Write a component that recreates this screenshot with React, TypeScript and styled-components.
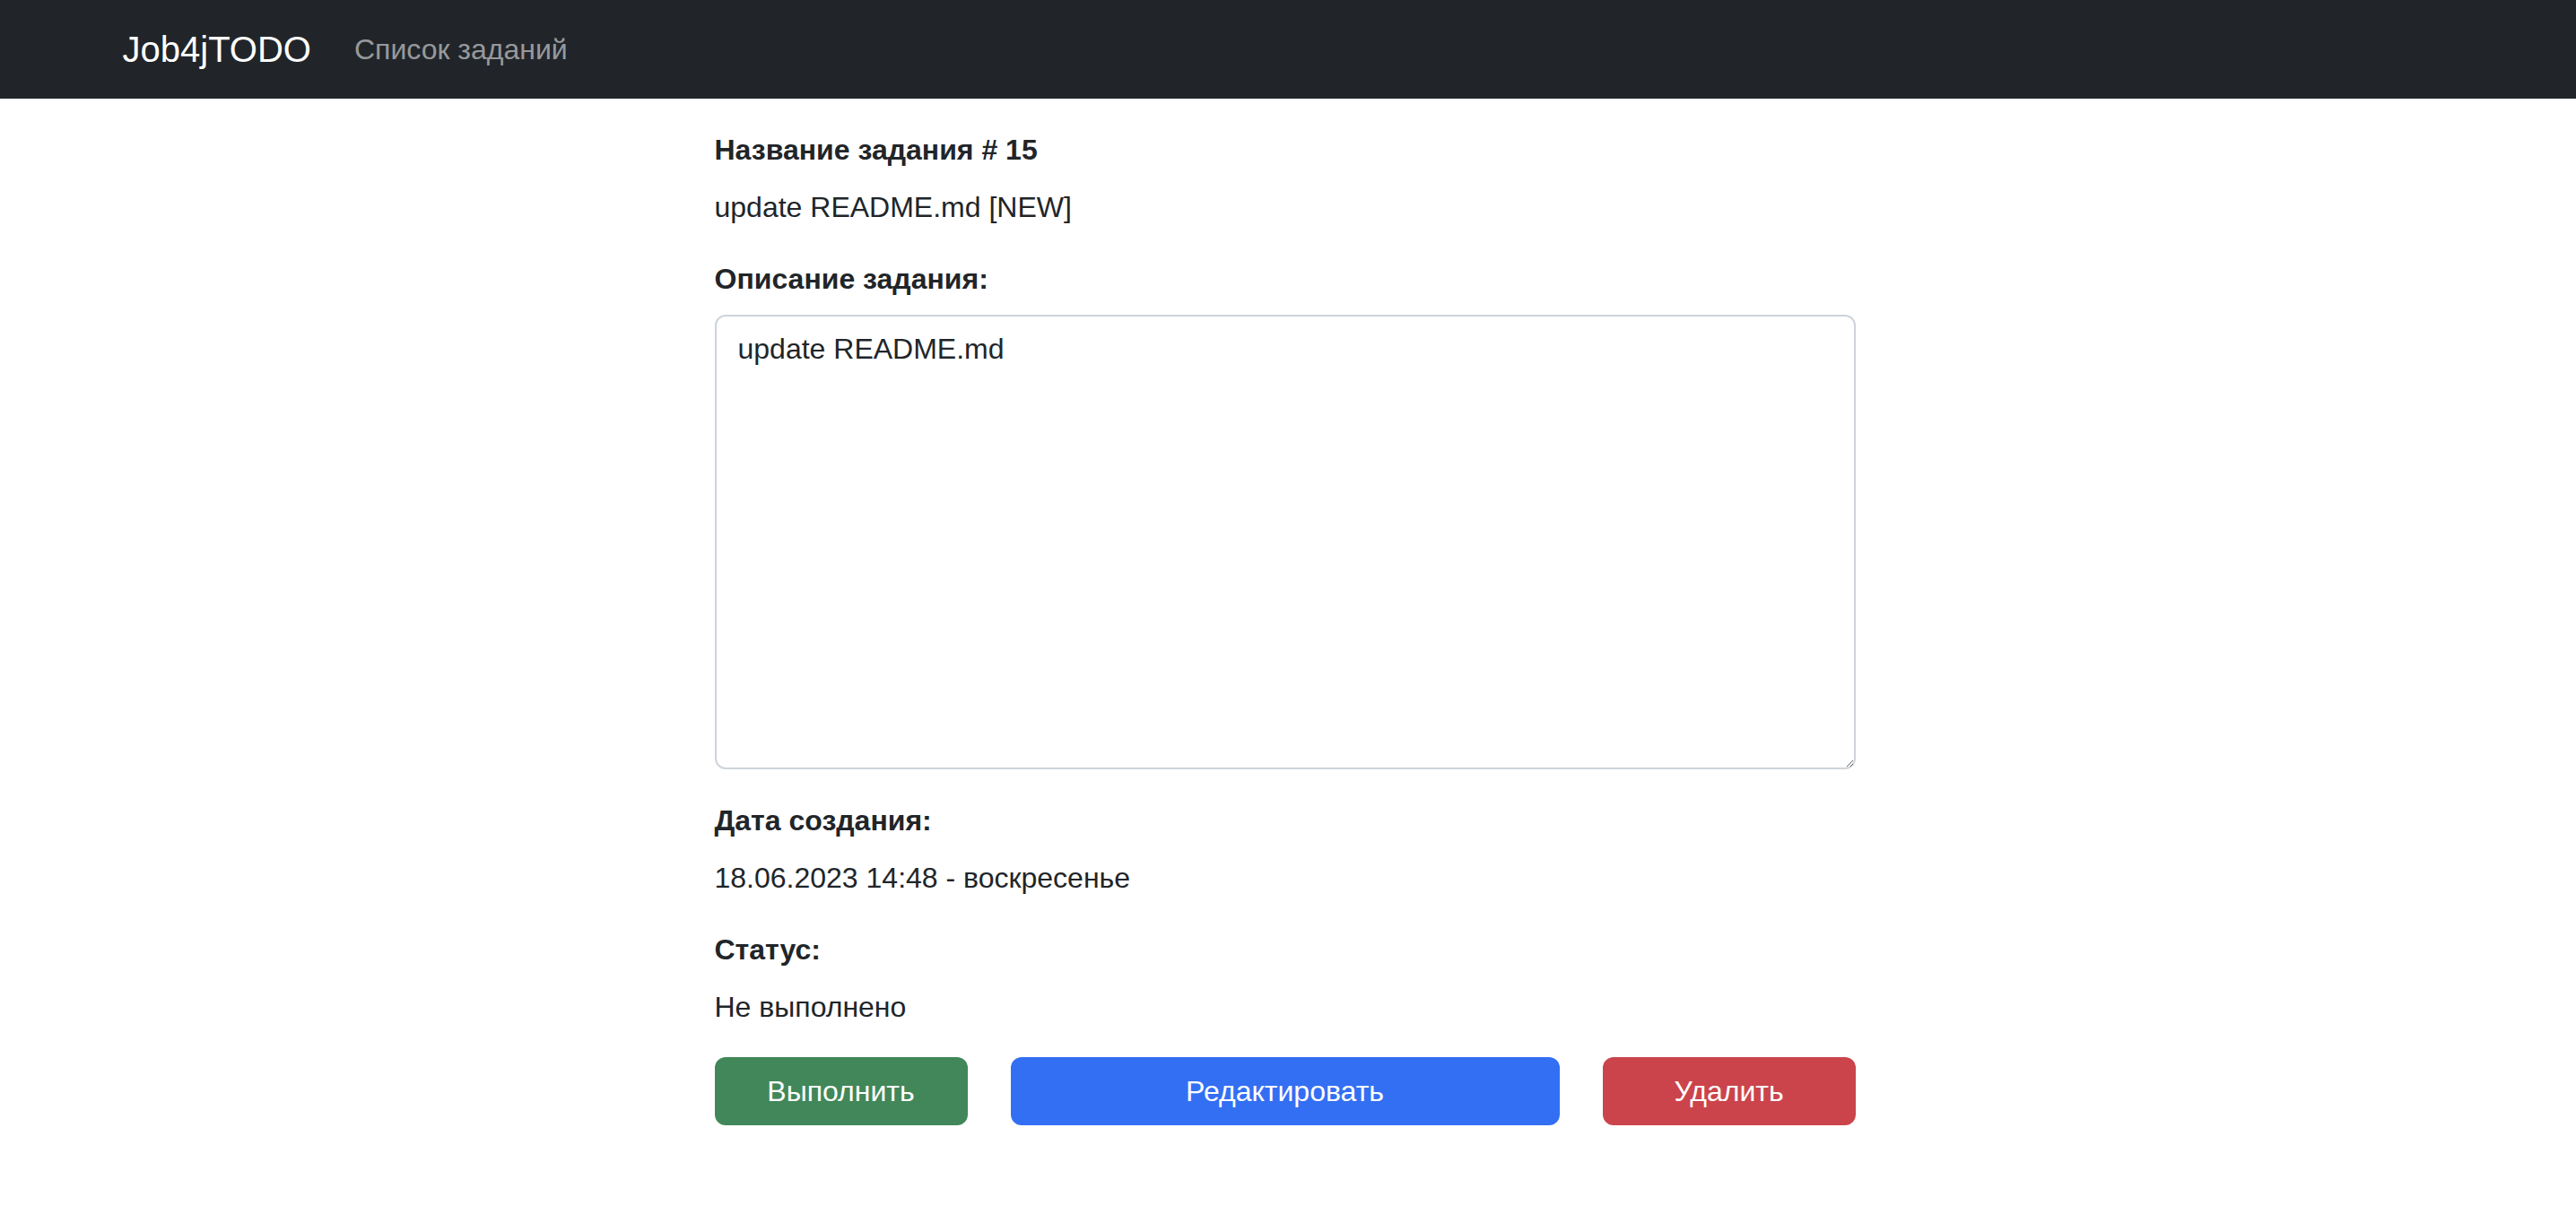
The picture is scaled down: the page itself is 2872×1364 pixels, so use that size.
import React from "react";
import styled, { createGlobalStyle } from "styled-components";

const GlobalStyle = createGlobalStyle`
  html, body {
    margin: 0;
    padding: 0;
    background: #ffffff;
  }
  body {
    font-family: "Liberation Sans", Arial, sans-serif;
    font-size: 32px;
    line-height: 48px;
    color: #212529;
  }
  *, *::before, *::after {
    box-sizing: border-box;
  }
`;

const NavBar = styled.nav`
  background: #212529;
  height: 110px;
  padding-right: 7px;
  display: flex;
  align-items: center;
`;

const NavContainer = styled.div`
  width: 2640px;
  margin: 0 auto;
  padding: 0 24px;
  display: flex;
  align-items: center;
`;

const Brand = styled.a`
  font-size: 40px;
  line-height: 60px;
  color: #ffffff;
  text-decoration: none;
  margin-right: 32px;
`;

const NavLink = styled.a`
  font-size: 32px;
  line-height: 48px;
  padding: 0 16px;
  color: rgba(255, 255, 255, 0.55);
  text-decoration: none;
`;

const Page = styled.div`
  padding-right: 7px;
`;

const Main = styled.main`
  width: 1272px;
  margin: 33px auto 0;
  display: flex;
  flex-direction: column;
`;

const Label = styled.label`
  display: block;
  font-weight: 700;
  margin-bottom: 16px;
`;

const Value = styled.p`
  margin: 0 0 32px;
`;

const Description = styled.textarea`
  display: block;
  width: 100%;
  height: 507px;
  margin: 0 0 33px;
  padding: 12px 24px;
  font-family: "Liberation Sans", Arial, sans-serif;
  font-size: 32px;
  line-height: 48px;
  color: #212529;
  background: #ffffff;
  border: 2px solid #ced4da;
  border-radius: 12px;
  outline: none;
  resize: both;
`;

const ButtonRow = styled.div`
  display: grid;
  grid-template-columns: 282px 612px 282px;
  column-gap: 48px;
`;

const Button = styled.button<{ $bg: string }>`
  height: 76px;
  padding: 12px 24px;
  border: none;
  border-radius: 12px;
  background: ${(p) => p.$bg};
  color: #ffffff;
  font-family: "Liberation Sans", Arial, sans-serif;
  font-size: 32px;
  line-height: 48px;
  cursor: pointer;
`;

export default function App() {
  return (
    <>
      <GlobalStyle />
      <NavBar>
        <NavContainer>
          <Brand href="#">Job4jTODO</Brand>
          <NavLink href="#">Список заданий</NavLink>
        </NavContainer>
      </NavBar>
      <Page>
        <Main>
          <Label>Название задания # 15</Label>
          <Value>update README.md [NEW]</Value>
          <Label>Описание задания:</Label>
          <Description readOnly defaultValue="update README.md" />
          <Label>Дата создания:</Label>
          <Value>18.06.2023 14:48 - воскресенье</Value>
          <Label>Статус:</Label>
          <Value>Не выполнено</Value>
          <ButtonRow>
            <Button $bg="#418759">Выполнить</Button>
            <Button $bg="#336ff3">Редактировать</Button>
            <Button $bg="#cb444b">Удалить</Button>
          </ButtonRow>
        </Main>
      </Page>
    </>
  );
}
